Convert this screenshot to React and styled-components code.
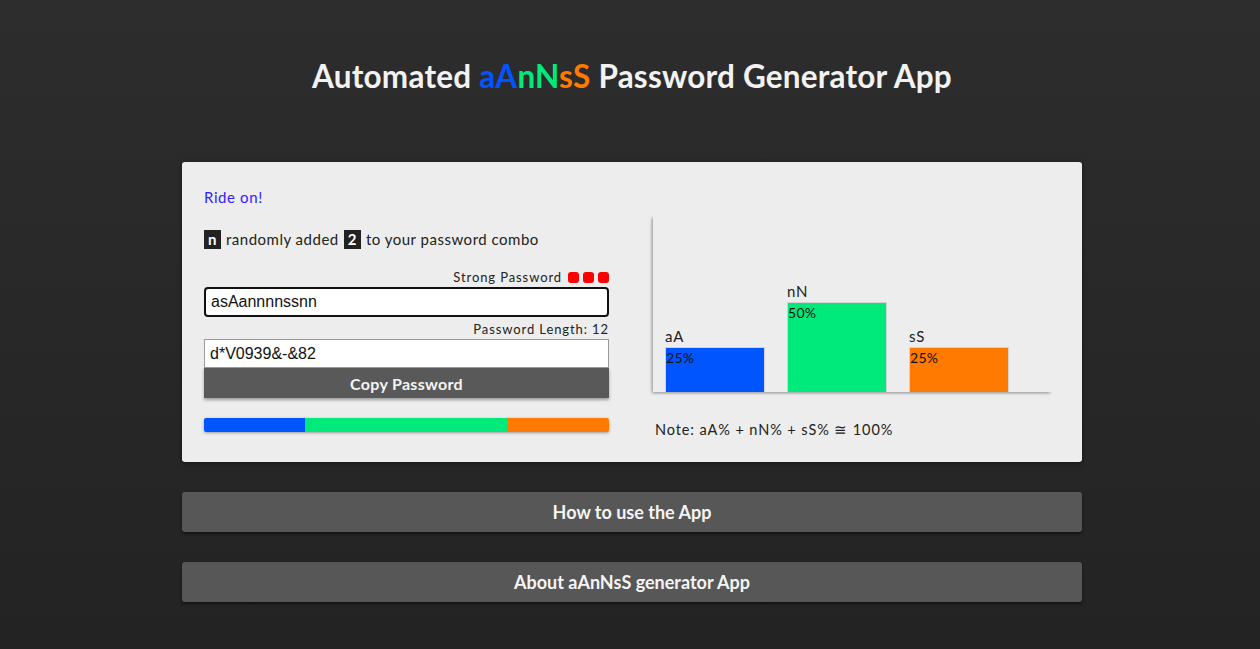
import styled, { createGlobalStyle } from "styled-components";

const GlobalStyle = createGlobalStyle`
  html, body {
    margin: 0;
    padding: 0;
  }
  body {
    min-height: 649px;
    background: linear-gradient(180deg, #2d2d2d 0%, #232323 100%);
    font-family: Lato, "Noto Sans", sans-serif;
  }
`

const Page = styled.div`
  width: 900px;
  margin: 0 auto;
  padding-left: 4px;
  padding-top: 56px;
  padding-bottom: 47px;
`

const Title = styled.h1`
  margin: 0 0 66px;
  text-align: center;
  color: #f2f2f2;
  font-size: 31.5px;
  line-height: 40px;
  font-weight: 700;
  letter-spacing: 0.2px;
`

const Letter = styled.span`
  color: ${(p) => p.$color};
`

const Card = styled.div`
  background-color: #ededed;
  border-radius: 3px;
  box-shadow: 0 1px 4px rgba(0, 0, 0, 0.5);
  display: grid;
  grid-template-columns: 405px 402px;
  column-gap: 44px;
  padding: 22px 22px 28px;
  height: 300px;
  box-sizing: border-box;
`

const Left = styled.div`
  display: flex;
  flex-direction: column;
`

const RideOn = styled.div`
  color: #3320ff;
  font-size: 15px;
  line-height: 20px;
  letter-spacing: 0.6px;
  margin-top: 3px;
`

const Combo = styled.div`
  margin-top: 22px;
  color: #222;
  font-size: 15px;
  line-height: 20px;
  letter-spacing: 0.5px;
  display: flex;
  align-items: center;
  gap: 5px;
`

const Badge = styled.span`
  background-color: #222;
  color: #fff;
  font-weight: 700;
  padding: 0 4px;
  line-height: 19px;
`

const Caption = styled.div`
  margin-top: ${(p) => p.$top}px;
  display: flex;
  justify-content: flex-end;
  align-items: center;
  gap: 4px;
  color: #222;
  font-size: 13px;
  line-height: 16px;
  letter-spacing: 0.9px;
`

const Dots = styled.span`
  display: flex;
  gap: 4px;
  margin-left: 2px;
`

const Dot = styled.span`
  width: 11px;
  height: 11px;
  border-radius: 3px;
  background-color: #ff0000;
`

const Field = styled.input`
  box-sizing: border-box;
  width: 100%;
  height: ${(p) => (p.$focused ? 30 : 29)}px;
  margin-top: 2px;
  padding: 0 5px;
  border: ${(p) => (p.$focused ? "2px solid #111" : "1px solid #9a9a9a")};
  border-radius: ${(p) => (p.$focused ? "4px" : "0")};
  background: #fff;
  font-family: "Liberation Sans", Arial, sans-serif;
  font-size: 16px;
  color: #111;
  outline: none;
`

const CopyButton = styled.button`
  width: 100%;
  height: 30px;
  border: none;
  background-color: #595959;
  color: #f4f4f4;
  font-family: Lato, "Noto Sans", sans-serif;
  font-size: 16px;
  font-weight: 700;
  letter-spacing: 0.3px;
  box-shadow: 0 2px 3px rgba(0, 0, 0, 0.35);
  cursor: pointer;
`

const MixBar = styled.div`
  margin-top: 20px;
  height: 14px;
  display: flex;
  box-shadow: 0 1px 3px rgba(0, 0, 0, 0.35);
  border-radius: 2px;
  overflow: hidden;
`

const MixPart = styled.div`
  flex: ${(p) => p.$share};
  background-color: ${(p) => p.$color};
`

const Right = styled.div`
  display: flex;
  flex-direction: column;
  padding-top: 29px;
`

const Chart = styled.div`
  height: 179px;
  display: flex;
  align-items: flex-end;
  gap: 22px;
  padding-left: 12px;
  box-shadow: -3px 3px 3px -2px rgba(0, 0, 0, 0.4);
`

const Column = styled.div`
  width: 100px;
  display: flex;
  flex-direction: column;
`

const ColumnLabel = styled.div`
  font-size: 15px;
  line-height: 18px;
  color: #222;
  letter-spacing: 0.8px;
  margin-bottom: 2px;
`

const Bar = styled.div`
  box-sizing: border-box;
  height: ${(p) => p.$height}px;
  background-color: ${(p) => p.$color};
  border: 1px solid #d2d2d2;
  border-bottom: none;
  font-size: 14px;
  line-height: 20px;
  letter-spacing: 0.3px;
  color: #111;
`

const Note = styled.div`
  margin-top: 29px;
  margin-left: 2px;
  font-size: 14.5px;
  color: #222;
  letter-spacing: 0.9px;
`

const Panel = styled.button`
  display: block;
  width: 100%;
  height: 40px;
  margin-top: 30px;
  border: none;
  border-radius: 3px;
  background-color: #575757;
  color: #f4f4f4;
  font-family: Lato, "Noto Sans", sans-serif;
  font-size: 18px;
  font-weight: 700;
  box-shadow: 0 2px 3px rgba(0, 0, 0, 0.5);
  cursor: pointer;
`

const BLUE = "#0055ff";
const GREEN = "#00e97b";
const ORANGE = "#ff7a00";

const mix = [
  { label: "aA", share: 25, color: BLUE },
  { label: "nN", share: 50, color: GREEN },
  { label: "sS", share: 25, color: ORANGE },
];

export default function App() {
  return (
    <>
      <GlobalStyle />
      <Page>
        <Title>
          Automated{" "}
          <Letter $color={BLUE}>aA</Letter>
          <Letter $color={GREEN}>nN</Letter>
          <Letter $color={ORANGE}>sS</Letter> Password Generator App
        </Title>

        <Card>
          <Left>
            <RideOn>Ride on!</RideOn>
            <Combo>
              <Badge>n</Badge> randomly added <Badge>2</Badge> to your password combo
            </Combo>
            <Caption $top={20}>
              Strong Password
              <Dots>
                <Dot />
                <Dot />
                <Dot />
              </Dots>
            </Caption>
            <Field $focused defaultValue="asAannnnssnn" />
            <Caption $top={4}>Password Length: 12</Caption>
            <Field readOnly defaultValue="d*V0939&-&82" />
            <CopyButton>Copy Password</CopyButton>
            <MixBar>
              {mix.map((m) => (
                <MixPart key={m.label} $share={m.share} $color={m.color} />
              ))}
            </MixBar>
          </Left>

          <Right>
            <Chart>
              {mix.map((m) => (
                <Column key={m.label}>
                  <ColumnLabel>{m.label}</ColumnLabel>
                  <Bar $height={m.share * 1.8} $color={m.color}>
                    {m.share}%
                  </Bar>
                </Column>
              ))}
            </Chart>
            <Note>Note: aA% + nN% + sS% ≅ 100%</Note>
          </Right>
        </Card>

        <Panel>How to use the App</Panel>
        <Panel>About aAnNsS generator App</Panel>
      </Page>
    </>
  );
}
